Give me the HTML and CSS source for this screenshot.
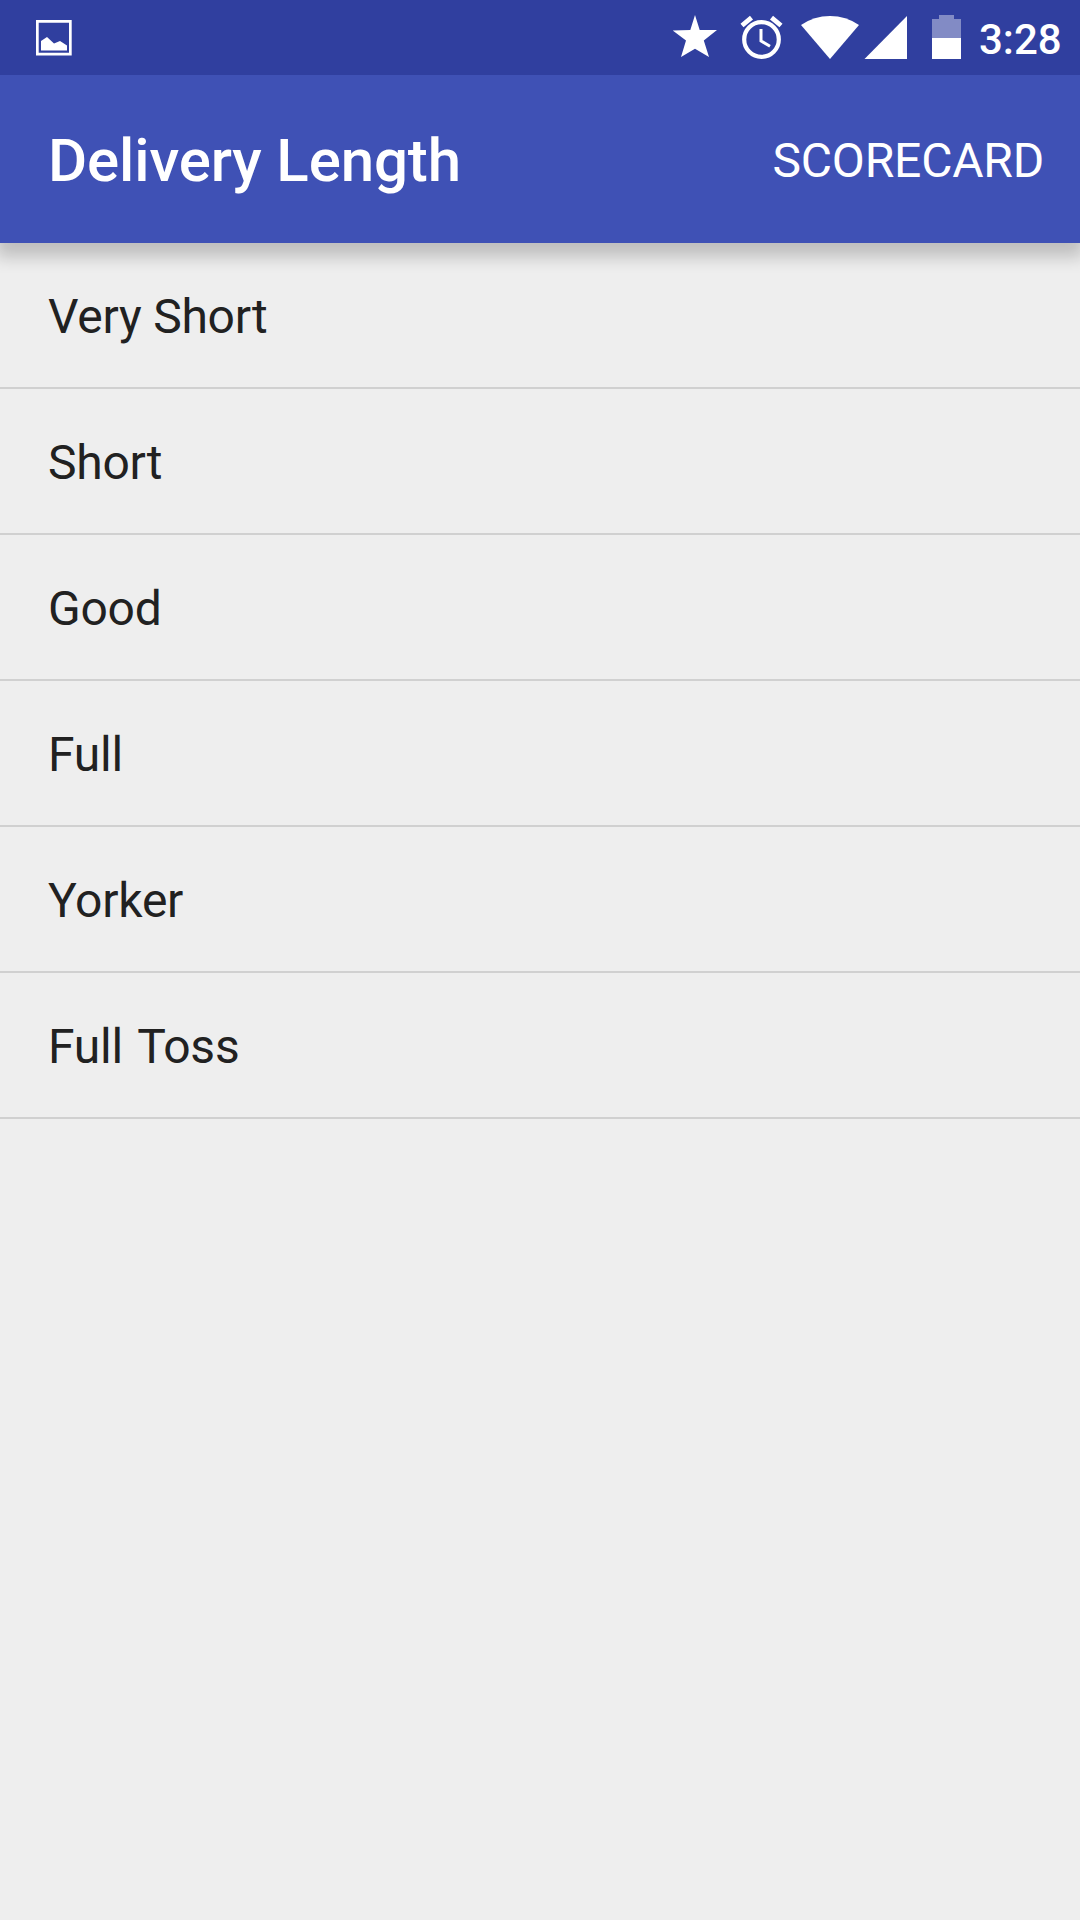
FILE: index.html
```html
<!DOCTYPE html>
<html lang="en">
<head>
<meta charset="utf-8">
<title>Delivery Length</title>
<link rel="stylesheet" href="styles.css">
</head>
<body>
<div class="status">
  <svg class="status-icons" width="979" height="75" viewBox="0 0 979 75" fill="#fff">
    <path fill-rule="evenodd" d="M36 20H71.700V55.500H36ZM38.700 22.700V52.800H69V22.700ZM41 50.500V41L47 37L54 43.500L60 41L67 45.500V50.500Z"/>
    <path d="M695 15L699.700 30H717L703.800 40.500L709 57L695 48.800L681 57L686 40.500L672.700 30.500L690.300 30Z"/>
    <g fill="none" stroke="#fff" stroke-width="4.200"><circle cx="761.500" cy="39.500" r="17.300"/><path stroke-width="4.800" d="M742 25.500L751.500 17.700M781 25.500L771.500 17.700"/><path stroke-width="3" d="M761 29V41L770 46.200"/></g>
    <path d="M801 25Q814 16 830 16T859 25L830 59Z"/>
    <path d="M907 16V59H864.500Z"/>
    <path fill-opacity=".4" d="M932 19H939V15H954V19H961V38H932Z"/>
    <path d="M932 38H961V59H932Z"/>
  </svg>
  <span class="clock">3:28</span>
</div>
<header class="toolbar"><h1 class="title">Delivery Length</h1><span class="action">SCORECARD</span></header>
<ul class="list">
  <li class="item">Very Short</li><li class="item">Short</li><li class="item">Good</li>
  <li class="item">Full</li><li class="item">Yorker</li><li class="item item-wide">Full Toss</li>
</ul>
</body>
</html>
```
FILE: styles.css
```css
body { margin: 0; height: 1920px; background: #eee; font-family: Roboto, sans-serif; overflow: hidden; }
.status { height: 75px; background: #303f9f; display: flex; color: #fff; }
.status-icons { flex: none; }
.clock { font-size: 42px; line-height: 80px; font-weight: 500; }
.toolbar { height: 168px; box-sizing: border-box; padding: 3px 36px 0 48px; background: #3f51b5; color: #fff; display: flex; align-items: center; justify-content: space-between; box-shadow: 0 10px 16px 4px rgba(0,0,0,.2); clip-path: inset(0 0 -30px 0); }
.title { margin: 0; font-size: 60px; font-weight: 500; letter-spacing: -.12px; }
.action { font-size: 48px; letter-spacing: -.2px; padding-bottom: 1px; }
.list { margin: 0; padding: 0; list-style: none; }
.item { height: 146px; box-sizing: border-box; padding-left: 48px; border-bottom: 2px solid #d0d0d0; font-size: 48px; line-height: 147px; letter-spacing: -.23px; color: #212121; }
.item-wide { word-spacing: 3.5px; }
```
